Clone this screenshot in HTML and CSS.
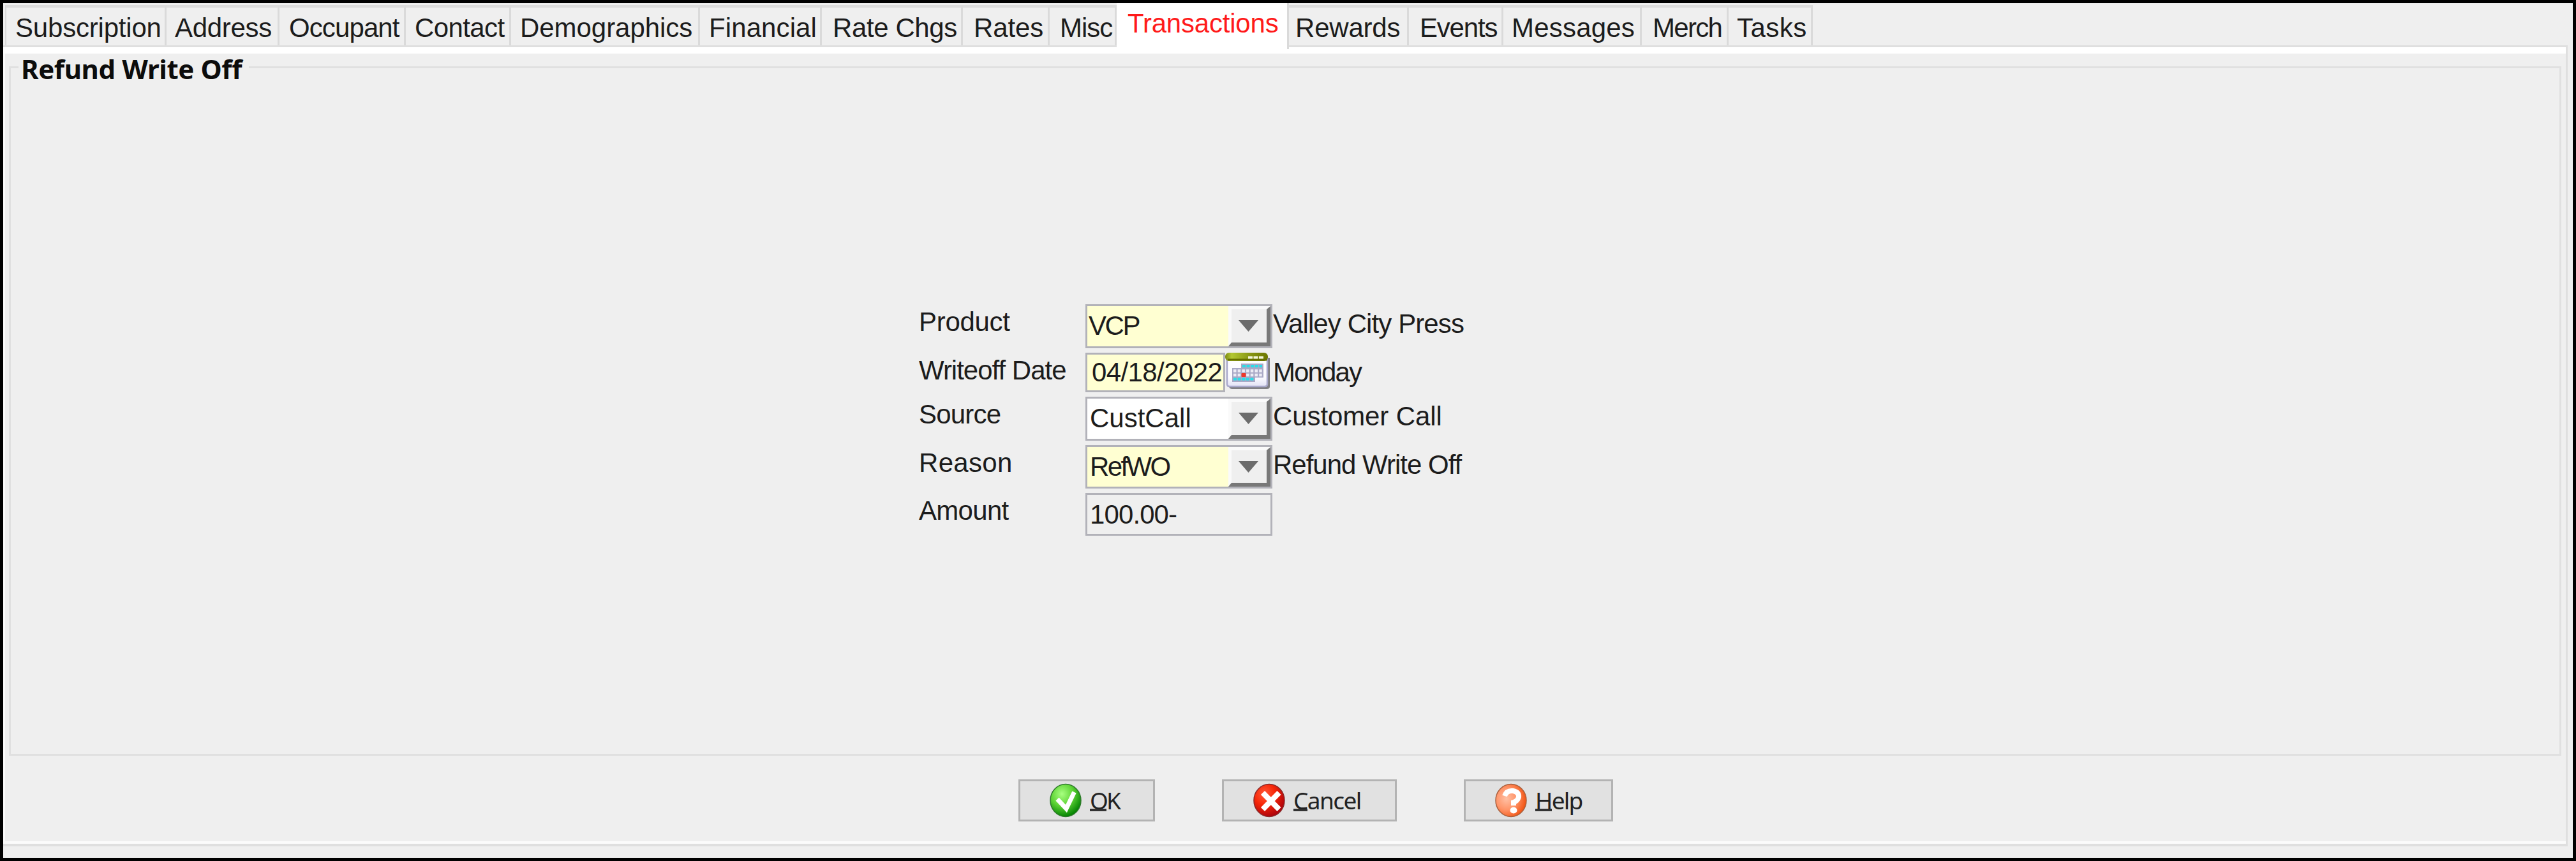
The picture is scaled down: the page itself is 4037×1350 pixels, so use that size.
FILE: index.html
```html
<!DOCTYPE html>
<html lang="en">
<head>
<meta charset="utf-8">
<title>Refund Write Off</title>
<link rel="stylesheet" href="styles.css">
</head>
<body>
<div class="window">
  <nav class="tabs">
    <a class="tab subscription"><span>Subscription</span></a>
    <a class="tab address"><span>Address</span></a>
    <a class="tab occupant"><span>Occupant</span></a>
    <a class="tab contact"><span>Contact</span></a>
    <a class="tab demographics"><span>Demographics</span></a>
    <a class="tab financial"><span>Financial</span></a>
    <a class="tab rate-chgs"><span>Rate Chgs</span></a>
    <a class="tab rates"><span>Rates</span></a>
    <a class="tab misc"><span>Misc</span></a>
    <a class="tab active transactions"><span>Transactions</span></a>
    <a class="tab rewards"><span>Rewards</span></a>
    <a class="tab events"><span>Events</span></a>
    <a class="tab messages"><span>Messages</span></a>
    <a class="tab merch"><span>Merch</span></a>
    <a class="tab tasks"><span>Tasks</span></a>
  </nav>
  <main class="pane">
    <section class="group">
      <h1 class="group-title"><span>Refund Write Off</span></h1>
      <div class="form">
        <label class="label l-product">Product</label>
        <div class="field required"><span class="value v-product">VCP</span><button class="drop"><svg width="31" height="18" viewBox="0 0 31 18"><path d="M0 0H31L15.500 18Z" fill="#6c6c6c"/></svg></button></div>
        <span class="note n-product">Valley City Press</span>

        <label class="label l-date">Writeoff Date</label>
        <div class="date">
          <div class="field required"><span class="value v-date">04/18/2022</span></div>
          <svg class="calendar" width="74" height="60" viewBox="0 0 74 60">
            <defs>
              <linearGradient id="olive"><stop offset="0" stop-color="#7d8a12"/><stop offset=".15" stop-color="#b3c832"/><stop offset=".6" stop-color="#869413"/><stop offset="1" stop-color="#6b7600"/></linearGradient>
              <linearGradient id="paper" x2="0" y2="1"><stop offset="0" stop-color="#fff"/><stop offset=".7" stop-color="#fafaff"/><stop offset="1" stop-color="#e2e2f5"/></linearGradient>
            </defs>
            <path d="M8 8H70V53Q70 57 65 57H11Q7 57 6 53Z" fill="#808084"/>
            <path d="M3 8H66V49Q66 53 62 53H7Q3 53 3 49Z" fill="url(#paper)" stroke="#a9a9cb" stroke-width="2.500"/>
            <rect x="0" y="0" width="67" height="13" rx="6" fill="url(#olive)"/>
            <path d="M4 11H66" stroke="#667000" stroke-width="3"/>
            <path d="M36 7.500H60" stroke="#f4f6dc" stroke-width="4" stroke-dasharray="7 1.500"/>
            <path d="M25 17H60V39H47V46H11V24H25Z" fill="#a9a9c6"/>
            <g fill="none">
              <path d="M27 21H58" stroke="#2bdde8" stroke-width="4" stroke-dasharray="5 1.600"/>
              <path d="M13 28.500H59M13 35H59" stroke="#ececf5" stroke-width="4.500" stroke-dasharray="4.500 2.200"/>
              <path d="M13 41.500H45" stroke="#2bdde8" stroke-width="4" stroke-dasharray="5 1.600"/>
            </g>
            <rect x="25.500" y="32" width="7" height="6" rx="1" fill="#ee382b"/>
          </svg>
        </div>
        <span class="note n-date">Monday</span>

        <label class="label l-source">Source</label>
        <div class="field"><span class="value v-source">CustCall</span><button class="drop"><svg width="31" height="18" viewBox="0 0 31 18"><path d="M0 0H31L15.500 18Z" fill="#6c6c6c"/></svg></button></div>
        <span class="note n-source">Customer Call</span>

        <label class="label l-reason">Reason</label>
        <div class="field required"><span class="value v-reason">RefWO</span><button class="drop"><svg width="31" height="18" viewBox="0 0 31 18"><path d="M0 0H31L15.500 18Z" fill="#6c6c6c"/></svg></button></div>
        <span class="note n-reason">Refund Write Off</span>

        <label class="label l-amount">Amount</label>
        <div class="field readonly"><span class="value v-amount">100.00-</span></div>
      </div>
    </section>
    <footer class="actions">
      <button class="action ok">
        <svg width="50" height="54" viewBox="0 0 50 54">
          <defs><radialGradient id="green" cx=".38" cy=".3" r=".72"><stop offset="0" stop-color="#a8ff80"/><stop offset=".5" stop-color="#5fd436"/><stop offset="1" stop-color="#008000"/></radialGradient></defs>
          <ellipse cx="25" cy="27" rx="24" ry="25.500" fill="url(#green)" stroke="#2f7a2c" stroke-width="1.500"/>
          <path d="M12 25L26 40L38.500 14" fill="none" stroke="#fff" stroke-width="7"/>
        </svg>
        <span class="caption"><u>O</u>K</span>
      </button>
      <button class="action cancel">
        <svg width="50" height="54" viewBox="0 0 50 54">
          <defs><radialGradient id="red" cx=".35" cy=".3" r=".75"><stop offset="0" stop-color="#ff5a3a"/><stop offset=".45" stop-color="#f72708"/><stop offset="1" stop-color="#a8000c"/></radialGradient></defs>
          <ellipse cx="25" cy="27" rx="24" ry="25.500" fill="url(#red)" stroke="#8a2a2a" stroke-width="1.500"/>
          <path d="M15 15L40.500 41M40.500 15L15 41" stroke="#fff" stroke-width="8.500"/>
        </svg>
        <span class="caption"><u>C</u>ancel</span>
      </button>
      <button class="action help">
        <svg width="50" height="54" viewBox="0 0 50 54">
          <defs><radialGradient id="orange" cx=".35" cy=".45" r=".68"><stop offset="0" stop-color="#ffc0a4"/><stop offset=".5" stop-color="#ff9468"/><stop offset="1" stop-color="#f04c08"/></radialGradient></defs>
          <ellipse cx="25" cy="27" rx="24" ry="25.500" fill="url(#orange)" stroke="#a8603e" stroke-width="1.500"/>
          <path d="M15 20Q18 11 28 12Q38 14 37 22Q35 28 29 30V35" fill="none" stroke="#fff" stroke-width="8"/>
          <ellipse cx="29" cy="42.500" rx="5.500" ry="5" fill="#fff"/>
        </svg>
        <span class="caption"><u>H</u>elp</span>
      </button>
    </footer>
  </main>
</div>
</body>
</html>
```
FILE: styles.css
```css
* { box-sizing: border-box; }

body {
  margin: 0;
  background: #efefef;
  color: #1c1c1c;
  font: 42px/48px "Liberation Sans", Arial, sans-serif;
}

.window {
  display: flex;
  flex-direction: column;
  width: 4037px;
  height: 1350px;
  padding: 0 8px 18px 0;
  border: 5px solid #000;
  background: #efefef;
}

/* Tab strip */
.tabs {
  display: flex;
  flex: none;
  height: 69px;
  padding-left: 3px;
}

.tab {
  flex: none;
  height: 66px;
  margin-top: 3px;
  padding-top: 8px;
  border-top: 4px solid #dcdcdc;
  border-right: 3px solid #dadada;
  white-space: nowrap;
}

.tab:first-child { border-left: 2px solid #dadada; }

.tab.active {
  position: relative;
  z-index: 1;
  height: 72px;
  margin: 0;
  padding-top: 8px;
  border-top: 0;
  background: #fff;
  color: #ff1a1a;
}

.subscription { width: 253px; padding-left: 14px; letter-spacing: -0.2px; }
.address { width: 177px; padding-left: 13px; letter-spacing: -0.3px; }
.occupant { width: 198px; padding-left: 15px; letter-spacing: -0.9px; }
.contact { width: 165px; padding-left: 14px; letter-spacing: -0.6px; }
.demographics { width: 296px; padding-left: 14px; letter-spacing: -0.05px; }
.financial { width: 191px; padding-left: 14px; letter-spacing: 0.1px; }
.rate-chgs { width: 221px; padding-left: 17px; letter-spacing: -0.4px; }
.rates { width: 136px; padding-left: 17px; letter-spacing: -0.1px; }
.misc { width: 105px; padding-left: 16px; letter-spacing: -1px; }
.transactions { width: 270px; padding-left: 17px; letter-spacing: -0.2px; }
.rewards { width: 188px; padding-left: 10px; letter-spacing: -0.2px; }
.events { width: 148px; padding-left: 17px; letter-spacing: -1.2px; }
.messages { width: 217px; padding-left: 13px; letter-spacing: 0.2px; }
.merch { width: 136px; padding-left: 17px; letter-spacing: -1.7px; }
.tasks { width: 132px; padding-left: 13px; letter-spacing: 0.5px; }

/* Tab page */
.pane {
  display: flex;
  flex: 1;
  flex-direction: column;
  width: 4019px;
  margin-top: -3px;
  padding: 20px 7px 0 6px;
  border: solid #dfdfdf;
  border-width: 3px 3px 4px 0;
  box-shadow: inset 0 10px #fff, inset 3px 0 #fbfbfb, inset 0 -4px #fbfbfb;
}

.group {
  flex: none;
  width: 4000px;
  height: 1081px;
  margin: 10px 0 0 3px;
  border: 3px solid #e0e0e0;
}

.group-title {
  width: 361px;
  height: 48px;
  margin: -23px 0 0 12px;
  padding-left: 4px;
  background: #efefef;
  color: #0c0c0c;
  font: bold 42px/48px "Noto Sans", sans-serif;
  letter-spacing: -0.4px;
  white-space: nowrap;
}

/* Form */
.form {
  display: grid;
  grid-template-columns: 262px 293px auto;
  grid-template-rows: 69px 62px 69px 68px 67px;
  row-gap: 7px;
  justify-content: start;
  margin: 345px 0 0 1422px;
  white-space: nowrap;
}

.label { padding: 4px 0 0 1px; }

.field {
  display: flex;
  justify-content: space-between;
  padding-left: 4px;
  border: 3px solid #b2b2b9;
  background: #fff;
}

.field.required { background: #ffffd2; }
.field.readonly { background: #efefef; }

.value { margin-top: 7px; }

.drop {
  display: flex;
  align-items: center;
  justify-content: center;
  width: 66px;
  height: 100%;
  padding: 0 2px 0 0;
  border: solid;
  border-width: 5px 6px 6px 5px;
  border-color: #fafafa #787878 #787878 #fafafa;
  background: #efefef;
}

.date { display: flex; }
.date .field { width: 221px; padding-left: 7px; }
.date .value { margin-top: 4px; }
.calendar { flex: none; }
.note { padding: 7px 0 0 1px; }

.l-product { letter-spacing: -0.3px; }
.l-date { letter-spacing: -1px; }
.l-source { letter-spacing: -0.8px; }
.l-reason { letter-spacing: 0.3px; }
.l-amount { letter-spacing: -0.7px; }
.v-product { margin-left: -2px; letter-spacing: -2.4px; }
.v-date { letter-spacing: -0.6px; }
.v-source { letter-spacing: 0; }
.v-reason { letter-spacing: -2.6px; }
.v-amount { letter-spacing: -0.9px; }
.n-product { letter-spacing: -0.9px; }
.n-date { letter-spacing: -1.9px; }
.n-source { letter-spacing: -0.1px; }
.n-reason { letter-spacing: -1px; }

/* Buttons */
.actions {
  display: flex;
  gap: 105px;
  margin: 37px 0 0 1585px;
}

.action {
  display: flex;
  align-items: center;
  height: 66px;
  padding: 0 0 0 46px;
  border: 3px solid #b3b3b3;
  background: #e1e1e1;
  color: #222;
  font: 37px/48px "Noto Sans", sans-serif;
}

.action svg { flex: none; }

.caption { margin-left: 13px; }

.caption u {
  display: inline-block;
  height: 41px;
  border-bottom: 4px solid #333;
  line-height: 48px;
  text-decoration: none;
  vertical-align: top;
}

.ok { width: 214px; letter-spacing: -3px; }
.cancel { width: 274px; letter-spacing: -1.6px; }
.help { width: 234px; letter-spacing: -1.8px; }
```
